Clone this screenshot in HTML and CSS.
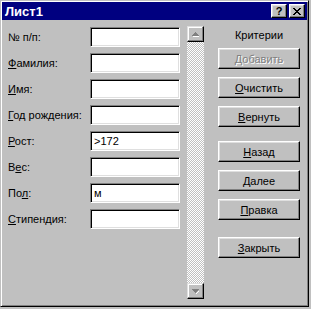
FILE: index.html
```html
<!DOCTYPE html>
<html>
<head>
  <title>Лист1</title>
  <link rel="stylesheet" href="styles.css">
</head>
<body>
  <div class="window">
    <div class="titlebar">
      <span class="title">Лист1</span>
      <button class="tbtn help">?</button>
      <button class="tbtn close">
        <svg width="8" height="7" viewBox="0 0 8 7"><path d="M0 0h2v1h1v1h2v-1h1v-1h2v1h-1v1h-1v1h-1v1h1v1h1v1h1v1h-2v-1h-1v-1h-2v1h-1v1h-2v-1h1v-1h1v-1h1v-1h-1v-1h-1v-1h-1z" fill="#000"/></svg>
      </button>
    </div>
    <div class="content">
      <div class="form">
        <label>№ п/п:</label><input type="text">
        <label><u>Ф</u>амилия:</label><input type="text">
        <label><u>И</u>мя:</label><input type="text">
        <label><u>Г</u>од рождения:</label><input type="text">
        <label><u>Р</u>ост:</label><input type="text" value="&gt;172">
        <label>В<u>е</u>с:</label><input type="text">
        <label>По<u>л</u>:</label><input type="text" value="м">
        <label><u>С</u>типендия:</label><input type="text">
      </div>
      <div class="scrollbar">
        <div class="sbtn">
          <svg width="7" height="5" viewBox="0 0 7 5"><path d="M1 4h6v1h-6z" fill="#fff"/><path d="M3 0h1v1h1v1h1v1h1v1h-7v-1h1v-1h1v-1h1z" fill="#808080"/></svg>
        </div>
        <div class="track"></div>
        <div class="sbtn">
          <svg width="7" height="5" viewBox="0 0 7 5"><path d="M4 4h1v-1h1v-1h1v1h-1v1h-1v1h-1z" fill="#fff"/><path d="M0 0h7v1h-1v1h-1v1h-1v1h-1v-1h-1v-1h-1v-1h-1z" fill="#808080"/></svg>
        </div>
      </div>
      <div class="panel">
        <div class="caption">Критерии</div>
        <button class="btn" disabled>Добавить</button>
        <button class="btn"><u>О</u>чистить</button>
        <button class="btn"><u>В</u>ернуть</button>
        <button class="btn sep"><u>Н</u>азад</button>
        <button class="btn"><u>Д</u>алее</button>
        <button class="btn"><u>П</u>равка</button>
        <button class="btn sep2"><u>З</u>акрыть</button>
      </div>
    </div>
  </div>
</body>
</html>
```

FILE: styles.css
```css
body {
  margin: 0;
  background-color: #c0c0c0;
  font-family: "Liberation Sans", Arial, sans-serif;
  font-size: 11px;
  color: #000;
}
.window {
  width: 309px;
  height: 307px;
  box-sizing: border-box;
  background-color: #c0c0c0;
  border: 1px solid;
  border-color: #c0c0c0 #000 #000 #c0c0c0;
  box-shadow: inset 1px 1px #fff, inset -1px -1px #808080;
  padding: 1px;
}
.titlebar {
  height: 18px;
  background-color: #000080;
  display: flex;
  align-items: center;
  padding: 0 2px 0 3px;
}
.title {
  flex: 1;
  color: #fff;
  font-weight: bold;
  font-size: 13px;
}
.tbtn {
  width: 16px;
  height: 14px;
  padding: 0;
  margin: 0;
  background-color: #c0c0c0;
  border: 1px solid;
  border-color: #fff #000 #000 #fff;
  box-shadow: inset -1px -1px #808080, inset 1px 1px #dfdfdf;
  display: flex;
  align-items: center;
  justify-content: center;
  font-family: "Liberation Sans", Arial, sans-serif;
  font-weight: bold;
  font-size: 11px;
  line-height: 1;
}
.help {
  margin-right: 2px;
}
.content {
  display: flex;
  padding: 6px 0 0 6px;
}
.form {
  display: grid;
  grid-template-columns: 82px 90px;
  row-gap: 6px;
  margin-top: 1px;
  align-content: start;
}
.form label {
  align-self: center;
  white-space: nowrap;
}
.form input {
  width: 90px;
  height: 20px;
  box-sizing: border-box;
  margin: 0;
  padding: 0 3px;
  background-color: #fff;
  border: 1px solid;
  border-color: #808080 #fff #fff #808080;
  box-shadow: inset 1px 1px #000, inset -1px -1px #dfdfdf;
  font-family: "Liberation Sans", Arial, sans-serif;
  font-size: 11px;
  color: #000;
  outline: none;
}
.scrollbar {
  margin-left: 7px;
  width: 17px;
  height: 273px;
  display: flex;
  flex-direction: column;
}
.sbtn {
  height: 16px;
  box-sizing: border-box;
  background-color: #c0c0c0;
  border: 1px solid;
  border-color: #dfdfdf #000 #000 #dfdfdf;
  box-shadow: inset -1px -1px #808080, inset 1px 1px #fff;
  display: flex;
  align-items: center;
  justify-content: center;
}
.track {
  flex: 1;
  background: repeating-conic-gradient(#fff 0 25%, #c0c0c0 0 50%) 0 0 / 2px 2px;
}
.panel {
  margin-left: 14px;
  width: 82px;
  display: flex;
  flex-direction: column;
}
.caption {
  height: 22px;
  line-height: 18px;
  text-align: center;
}
.btn {
  height: 21px;
  margin: 0 0 8px 0;
  padding: 0;
  background-color: #c0c0c0;
  border: 1px solid;
  border-color: #fff #000 #000 #fff;
  box-shadow: inset -1px -1px #808080, inset 1px 1px #dfdfdf;
  font-family: "Liberation Sans", Arial, sans-serif;
  font-size: 11px;
  color: #000;
}
.btn:disabled {
  color: #808080;
  text-shadow: 1px 1px #fff;
}
.sep {
  margin-top: 6px;
}
.sep2 {
  margin-top: 9px;
}
```
